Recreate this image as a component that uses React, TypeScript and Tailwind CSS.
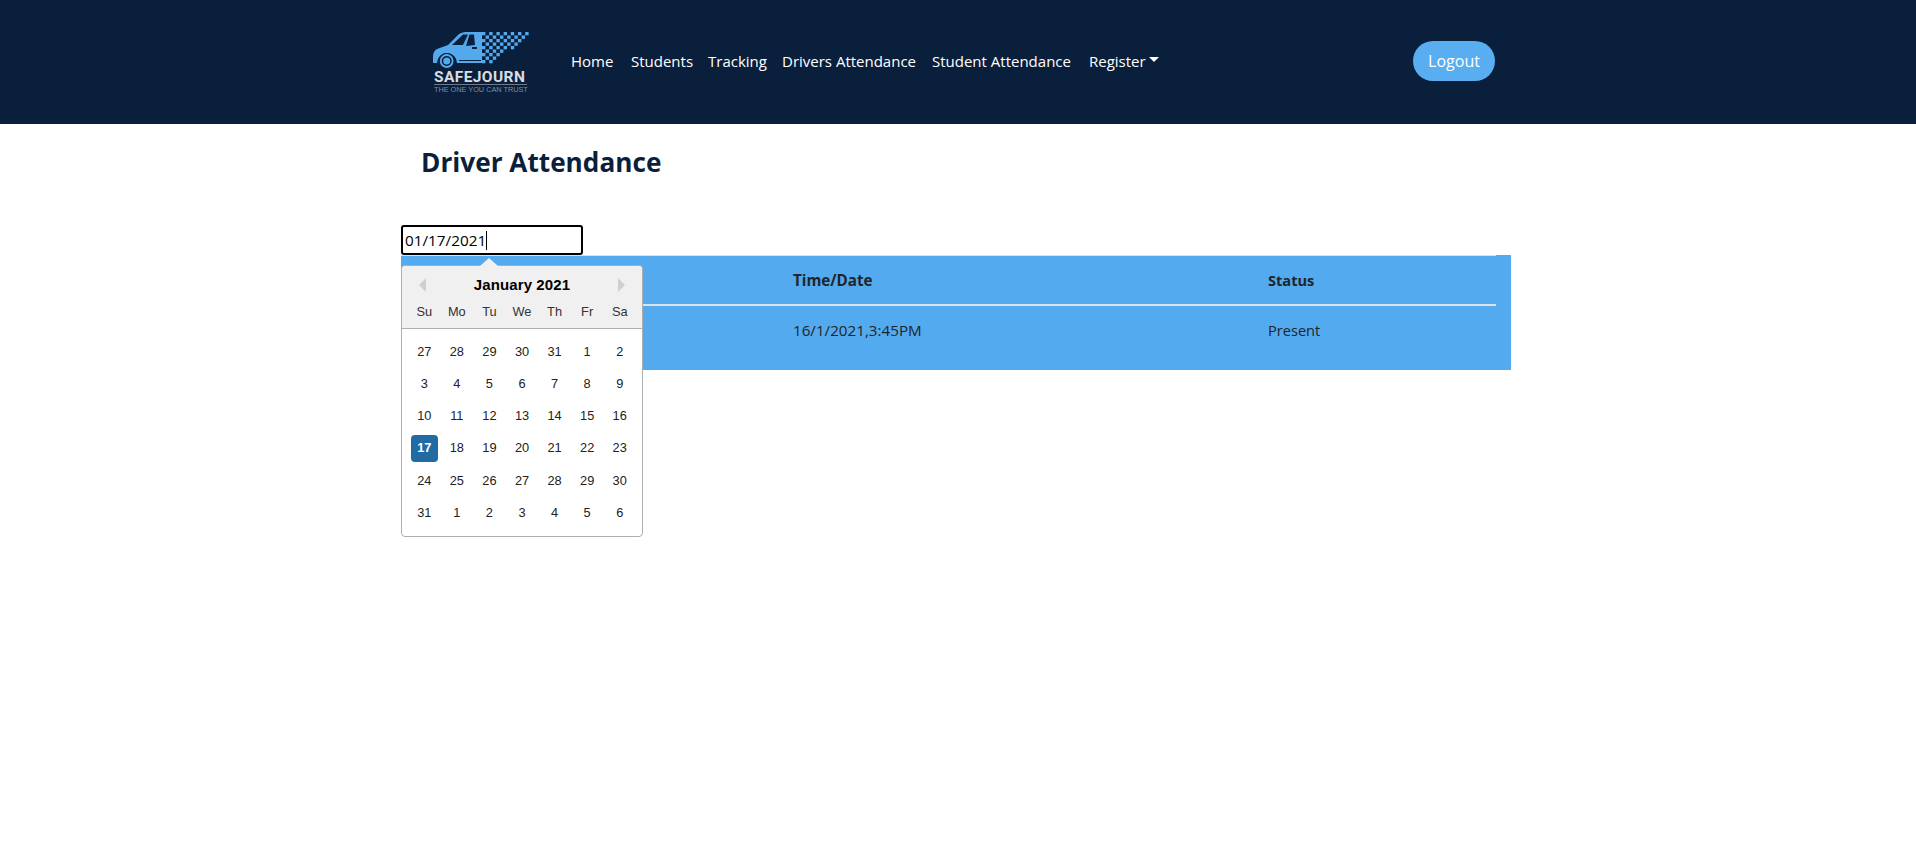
const font = "font-['Open_Sans','Noto_Sans',sans-serif]";

function Logo() {
  const squares: React.ReactElement[] = [];
  for (let c = 0; c < 14; c++) {
    for (let r = 0; r < 9; r++) {
      if ((c + r) % 2) continue;
      const x = 57 + c * 3.6;
      const y = 7 + r * 3.5;
      const limit = 106 - r * 5;
      if (x > limit) continue;
      squares.push(<rect key={`${c}-${r}`} x={x} y={y} width={3.4} height={3.3} fill="#54a9ec" />);
    }
  }
  return (
    <div className="flex w-[110px] shrink-0 flex-col">
      <svg width="110" height="44" viewBox="0 0 110 44" className="block">
        <path
          d="M8 33 C8 28 9 26 12 24 L23 20 L33 10 C35 8 37 7.500 40 7 L57 7 L57 38 L32 38 A10 10 0 0 0 12 38 L8 38 Z"
          fill="#54a9ec"
        />
        <path d="M27 20 L38 9.500 L43 9.500 L38 20 Z" fill="#0a1f3c" />
        <path d="M44.500 9.500 L49 9.500 L50 20 L41 21 Z" fill="#0a1f3c" />
        <rect x="47" y="22" width="5" height="2" fill="#0a1f3c" />
        <rect x="34" y="35" width="22" height="1" fill="#0a1f3c" />
        <circle cx="21.700" cy="36" r="7.500" fill="#54a9ec" stroke="#0a1f3c" strokeWidth="1.200" />
        <circle cx="21.700" cy="36" r="5" fill="#0a1f3c" />
        <circle cx="21.700" cy="36" r="3.500" fill="#54a9ec" />
        {squares}
      </svg>
      <span className="ml-[9px] mt-[2px] w-[93px] border-b border-[#6f7a88] pb-[1px] font-['Roboto',sans-serif] text-[15.500px] font-bold leading-[12px] tracking-[0.4px] text-[#d9dde2]">
        SAFEJOURN
      </span>
      <span className="ml-[9px] mt-[1px] whitespace-nowrap font-['Liberation_Sans',sans-serif] text-[7.300px] leading-[8px] text-[#828d9b]">
        THE ONE YOU CAN TRUST
      </span>
    </div>
  );
}

function Navbar() {
  return (
    <nav className="h-[124px] bg-[#0a1f3c]">
      <div className="mx-auto flex h-full w-[1140px] items-center pb-[2px] pl-[37px]">
        <div className="mb-[3px]">
          <Logo />
        </div>
        <ul className="ml-[36px] flex items-center text-[15px] leading-[24px] text-white">
          <li className="w-[60px]">Home</li>
          <li className="w-[77px]">Students</li>
          <li className="w-[74px]">Tracking</li>
          <li className="w-[150px]">Drivers Attendance</li>
          <li className="w-[157px]">Student Attendance</li>
          <li className="flex items-center">
            Register
            <span className="ml-[3px] mb-[3px] h-0 w-0 border-x-[5px] border-t-[5px] border-x-transparent border-t-white" />
          </li>
        </ul>
        <button className="ml-auto mr-[33px] h-[40px] w-[82px] rounded-[20px] bg-[#58aef0] text-[16px] text-white">
          Logout
        </button>
      </div>
    </nav>
  );
}

const weeks = [
  [27, 28, 29, 30, 31, 1, 2],
  [3, 4, 5, 6, 7, 8, 9],
  [10, 11, 12, 13, 14, 15, 16],
  [17, 18, 19, 20, 21, 22, 23],
  [24, 25, 26, 27, 28, 29, 30],
  [31, 1, 2, 3, 4, 5, 6],
];
const dayNames = ["Su", "Mo", "Tu", "We", "Th", "Fr", "Sa"];

function Calendar() {
  return (
    <div className="absolute left-0 top-[40px] z-10 w-[242px] rounded-[4px] border border-[#aeaeae] bg-white font-['Liberation_Sans',sans-serif] text-[12.800px] text-black">
      <div className="absolute -top-[8px] left-[78px] h-0 w-0 border-x-[9px] border-b-[8px] border-x-transparent border-b-[#f0f0f0]" />
      <div className="h-[63px] rounded-t-[4px] border-b border-[#aeaeae] bg-[#f0f0f0] px-[6px]">
        <div className="flex h-[36px] items-center justify-between px-[11px] pt-[2px]">
          <span className="h-0 w-0 border-y-[7px] border-r-[7px] border-y-transparent border-r-[#ccd0d5]" />
          <span className="text-[15px] font-bold tracking-[0.1px]">January 2021</span>
          <span className="h-0 w-0 border-y-[7px] border-l-[7px] border-y-transparent border-l-[#ccd0d5]" />
        </div>
        <div className="grid grid-cols-7 pt-[1px] text-center leading-[17px] text-[#333333]">
          {dayNames.map((d) => (
            <div key={d}>{d}</div>
          ))}
        </div>
      </div>
      <div className="grid grid-cols-7 px-[6px] pb-[7px] pt-[6px] text-center">
        {weeks.flat().map((d, i) => (
          <div key={i} className="flex h-[32.300px] items-center justify-center">
            <span
              className={
                i === 21
                  ? "flex h-[27px] w-[27px] items-center justify-center rounded-[4px] bg-[#216ba5] font-bold text-white"
                  : "text-[#222222]"
              }
            >
              {d}
            </span>
          </div>
        ))}
      </div>
    </div>
  );
}

export default function App() {
  return (
    <div className={`min-h-[857px] bg-white ${font}`}>
      <Navbar />
      <main className="ml-[401px] w-[1110px]">
        <h3 className="ml-[20px] mt-[21px] text-[26.200px] font-bold leading-[34px] text-[#0a1f3c]">Driver Attendance</h3>
        <div className="relative mt-[46px]">
          <div className="flex h-[30px] w-[182px] items-center rounded-[3px] border-2 border-black px-[2px] text-[15.300px] text-black">
            <span>01/17/2021</span>
            <span className="h-[19px] w-px bg-black" />
          </div>
          <Calendar />
        </div>
        <div className="bg-[#53aaef] pb-[16px] pr-[15px] text-[14.600px] leading-[24px] text-[#212529]">
          <table className="w-full table-fixed border-collapse text-left">
            <thead>
              <tr className="border-t border-b-2 border-t-[#dee2e6] border-b-[#dee2e6]">
                <th className="h-[49px] w-[380px] pl-[12px] font-bold">Name</th>
                <th className="w-[475px] pl-[12px] text-[15.200px] font-bold">Time/Date</th>
                <th className="pl-[12px] font-bold">Status</th>
              </tr>
            </thead>
            <tbody>
              <tr>
                <td className="h-[49px] pl-[12px]">Driver</td>
                <td className="pl-[12px] text-[15.200px]">16/1/2021,3:45PM</td>
                <td className="pl-[12px]">Present</td>
              </tr>
            </tbody>
          </table>
        </div>
      </main>
    </div>
  );
}
